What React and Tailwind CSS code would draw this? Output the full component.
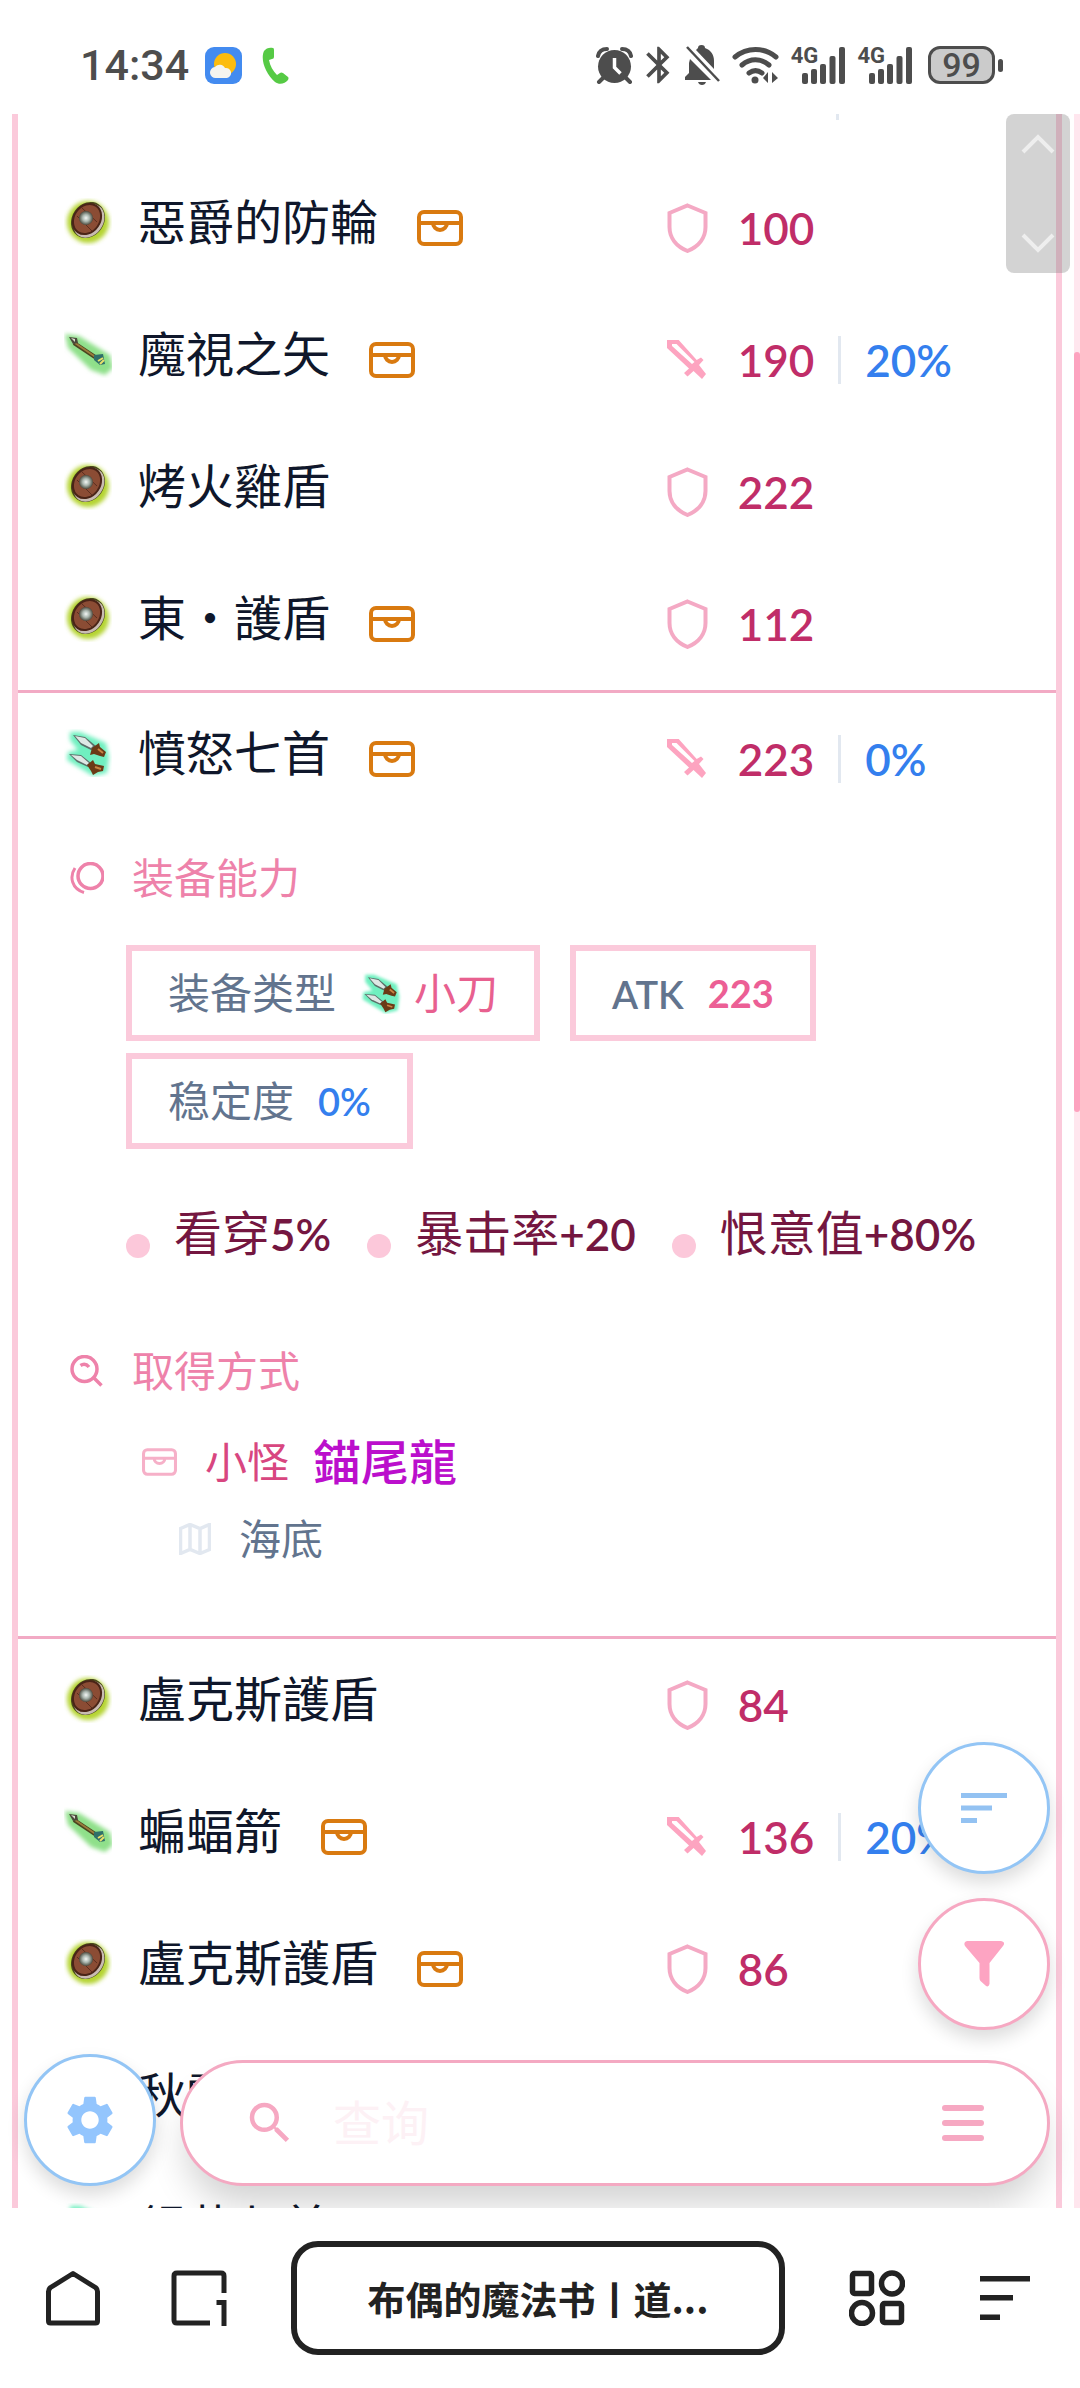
import { useState } from 'react';
import { MdBluetooth, MdSearch, MdSettings } from 'react-icons/md';

// Equipment shown above the opened entry
const itemsBefore = [
    { id: 1, type: 'shield', name: '惡爵的防輪', chest: true, value: 100 },
    { id: 2, type: 'arrow', name: '魔視之矢', chest: true, value: 190, stability: '20%' },
    { id: 3, type: 'shield', name: '烤火雞盾', value: 222 },
    { id: 4, type: 'shield', name: '東・護盾', chest: true, value: 112 },
];

const openItem = { id: 5, type: 'dagger', name: '憤怒七首', chest: true, value: 223, stability: '0%' };

// Equipment shown below the opened entry
const itemsAfter = [
    { id: 6, type: 'shield', name: '盧克斯護盾', value: 84 },
    { id: 7, type: 'arrow', name: '蝙蝠箭', chest: true, value: 136, stability: '20%' },
    { id: 8, type: 'shield', name: '盧克斯護盾', chest: true, value: 86 },
    { id: 9, type: 'shield', name: '秋霜', value: 90 },
    { id: 10, type: 'dagger', name: '銀花七首', value: 95 },
];

function ShieldPicture({ className }) {
    return (
        <svg viewBox="0 0 48 48" className={className} aria-hidden="true">
            <defs>
                <filter id="shieldGlow" x="-30%" y="-30%" width="160%" height="160%">
                    <feGaussianBlur stdDeviation="2" />
                </filter>
                <radialGradient id="shieldBoss">
                    <stop offset="0" stopColor="#f4f7f5" />
                    <stop offset="0.5" stopColor="#a9b5ae" />
                    <stop offset="1" stopColor="#4c4a3e" />
                </radialGradient>
            </defs>
            <circle cx="24" cy="24" r="21" fill="#b5d433" filter="url(#shieldGlow)" />
            <ellipse cx="24" cy="22" rx="16" ry="19" transform="rotate(35 24 22)" fill="#4a4a1c" />
            <ellipse cx="25" cy="23" rx="14" ry="18" transform="rotate(35 25 23)" fill="#c9bcb2" />
            <ellipse cx="23" cy="21" rx="14" ry="17" transform="rotate(35 23 21)" fill="#4a2417" />
            <ellipse cx="23" cy="21" rx="12" ry="15" transform="rotate(35 23 21)" fill="#8b4c34" />
            <path d="M13 18l15 15M18 10l15 14" stroke="#5c2e1f" strokeWidth="1" />
            <circle cx="22" cy="20" r="7" fill="url(#shieldBoss)" />
        </svg>
    );
}

function ArrowPicture({ className }) {
    return (
        <svg viewBox="0 0 48 48" className={className} aria-hidden="true">
            <defs>
                <filter id="arrowGlow" x="-30%" y="-30%" width="160%" height="160%">
                    <feGaussianBlur stdDeviation="2" />
                </filter>
            </defs>
            <path d="M1 4l14 2 31 19 3 13-8 7-14-5L4 18z" fill="#8fe08a" filter="url(#arrowGlow)" />
            <path d="M10 13l24 16" stroke="#4a4420" strokeWidth="4" />
            <path d="M11 13l22 15" stroke="#9a7c3c" strokeWidth="2" />
            <path d="M5 7l8 1 1 5-5 1z" fill="#4b4a3a" />
            <path d="M7 8l4 1v3z" fill="#d9ded0" />
            <path d="M30 25l9-1 1 5 1 5-5 1-6-5z" fill="#2f6f6a" />
            <path d="M34 31l5-3M36 34l4-4" stroke="#e8df6a" strokeWidth="2" />
        </svg>
    );
}

function DaggerPicture({ className }) {
    return (
        <svg viewBox="0 0 48 48" className={className} aria-hidden="true">
            <defs>
                <filter id="daggerGlow" x="-30%" y="-30%" width="160%" height="160%">
                    <feGaussianBlur stdDeviation="2" />
                </filter>
            </defs>
            <path d="M6 3h10l26 11 3 14-2 16-14 3L3 31l1-8 10-2-8-10z" fill="#6ff0c0" filter="url(#daggerGlow)" />
            <path d="M9 6l12 2 11 9-3 5-12-6z" fill="#5b6e69" />
            <path d="M11 7l10 2 8 8-2 2-10-5z" fill="#dfe8e5" />
            <path d="M28 19l7-5 1 4 6 5-2 5-4-1-6-2-4 1z" fill="#6b3a16" />
            <path d="M34 20l5 4" stroke="#c98342" strokeWidth="2" />
            <path d="M5 25l12 1 10 8-3 4-11-5z" fill="#5b6e69" />
            <path d="M7 26l10 1 8 7-2 2-10-5z" fill="#dfe8e5" />
            <path d="M23 36l6-5 2 4 9 2-1 5-5 1-5 3-2-4z" fill="#6b3a16" />
            <path d="M31 38l6 2" stroke="#c98342" strokeWidth="2" />
        </svg>
    );
}

function ItemPicture({ type, className }) {
    if (type === 'arrow') return <ArrowPicture className={className} />;
    if (type === 'dagger') return <DaggerPicture className={className} />;
    return <ShieldPicture className={className} />;
}

function ChestIcon({ className }) {
    return (
        <svg viewBox="0 0 46 36" fill="none" stroke="currentColor" strokeWidth="4" className={className} aria-hidden="true">
            <rect x="2" y="2" width="42" height="32" rx="5" />
            <path d="M2 13h42M16 13a7 7 0 0 0 14 0" />
        </svg>
    );
}

function ShieldIcon() {
    return (
        <svg viewBox="0 0 41 50" fill="none" stroke="#f4a9c4" strokeWidth="4" className="h-[50px] w-[41px] shrink-0" aria-hidden="true">
            <path d="M20.5 2.5l18 7.500V24c0 11-7 19.500-18 24C9.500 43.500 2.500 35 2.500 24V10z" />
        </svg>
    );
}

function SwordIcon() {
    return (
        <svg viewBox="0 0 41 40" fill="#fda4c0" className="h-10 w-[41px] shrink-0" aria-hidden="true">
            <path
                fillRule="evenodd"
                d="M0 0h11.700l18 20 4.300-2.500 2.500 2.500-4.500 5 7 9-4 5-8.500-8-6 5.500-3.500-3.500 5-4.500L0 8zM5 4v2l20 18 2.500-2L9.500 4z"
            />
        </svg>
    );
}

// One line of the list: picture, name, drop marker and main stats
function ItemRow({ item }) {
    return (
        <div className="grid h-[132px] grid-cols-[5fr_3fr] items-center">
            <div className="flex items-center gap-[39px] pl-[46px]">
                <div className="flex items-center gap-[26px] pb-3">
                    <ItemPicture type={item.type} className="size-12 shrink-0" />
                    <span className="whitespace-nowrap text-5xl leading-[48px] text-slate-900">{item.name}</span>
                </div>
                {item.chest && <ChestIcon className="h-9 w-[46px] shrink-0 text-[#d97a10]" />}
            </div>
            <div className="flex items-center whitespace-nowrap text-[44px] leading-[48px] font-semibold">
                {item.type === 'shield' ? <ShieldIcon /> : <SwordIcon />}
                <span className="ml-[30px] text-[#c02d68]">{item.value}</span>
                {item.stability && (
                    <span className="ml-6 border-l-3 border-slate-200 pl-6 text-[#347fee]">{item.stability}</span>
                )}
            </div>
        </div>
    );
}

function Chip({ label, children }) {
    return (
        <div className="flex h-24 items-center gap-6 border-6 border-[#fbcadb] px-9 leading-[48px]">
            <dt className="text-slate-500">{label}</dt>
            <dd className="flex items-center gap-3">{children}</dd>
        </div>
    );
}

function Ability({ name, amount }) {
    return (
        <li className="flex items-end gap-6">
            <span className="size-6 rounded-full bg-[#fcc8da]"></span>
            <span className="text-5xl leading-[48px]">
                {name}
                <span className="text-[44px] font-semibold leading-[48px]">{amount}</span>
            </span>
        </li>
    );
}

// Details of the opened entry
function ItemDetails() {
    return (
        <div lang="zh-CN" className="pb-[73px] pt-[29px] font-[Lato,'Noto_Sans_CJK_SC',sans-serif] text-[42px] leading-[48px]">
            <h2 className="flex items-center gap-7 pl-[52px] text-[#ee82aa]">
                <svg viewBox="0 0 34 32" fill="none" stroke="currentColor" className="h-8 w-[34px]" aria-hidden="true">
                    <circle cx="20.500" cy="14" r="12.500" strokeWidth="3.500" />
                    <path d="M5 6C-1 15 2 27 14 30.500" strokeWidth="3" />
                </svg>
                装备能力
            </h2>

            <dl className="mt-[43px] flex flex-wrap gap-x-[30px] gap-y-3 pl-[108px]">
                <Chip label="装备类型">
                    <DaggerPicture className="size-[42px]" />
                    <span className="text-[#e8608f]">小刀</span>
                </Chip>
                <Chip label={<span className="text-[38px] leading-[48px] font-semibold">ATK</span>}>
                    <span className="text-[38px] leading-[48px] font-bold text-[#ec5f95]">223</span>
                </Chip>
                <Chip label="稳定度">
                    <span className="text-[38px] leading-[48px] font-semibold text-[#347fee]">0%</span>
                </Chip>
            </dl>

            <ul className="mt-[60px] flex flex-wrap gap-x-9 pl-[108px] text-[#741640]">
                <Ability name="看穿" amount="5%" />
                <Ability name="暴击率" amount="+20" />
                <Ability name="恨意值" amount="+80%" />
            </ul>

            <h2 className="mt-[89px] flex items-center gap-[29px] pl-[52px] text-[#ee82aa]">
                <svg viewBox="0 0 33 32" fill="none" stroke="currentColor" strokeWidth="3.500" className="h-8 w-[33px]" aria-hidden="true">
                    <circle cx="14.500" cy="14" r="12.500" />
                    <path d="M23 22l8.500 8.500M10.500 10.500c3-2 6-1.500 8.500 1.500" />
                </svg>
                取得方式
            </h2>

            <div className="mt-[43px] flex items-center pl-[124px]">
                <ChestIcon className="h-7 w-[35px] text-[#f6b0c8]" />
                <span className="ml-7 text-[#d84680]">小怪</span>
                <a href="#monster" lang="zh-TW" className="ml-6 text-5xl leading-[48px] font-medium text-[#bb0fcc]">錨尾龍</a>
            </div>

            <div className="mt-[29px] flex items-center gap-7 pl-[161px] text-slate-500">
                <svg viewBox="0 0 32 32" fill="none" stroke="#e2e8f0" strokeWidth="3.500" className="size-8" aria-hidden="true">
                    <path d="M1.500 5.500l9.500-4 10 4 9.500-4v25l-9.500 4-10-4-9.500 4zM11 1.500v25M21 5.500v25" />
                </svg>
                海底
            </div>
        </div>
    );
}

function Signal() {
    return (
        <div className="flex items-start">
            <span className="-mr-4 text-[22px] leading-[18px] font-bold">4G</span>
            <svg viewBox="0 0 43 37" fill="currentColor" className="h-[37px] w-[43px]" aria-hidden="true">
                <rect x="0" y="26" width="6" height="11" rx="2" />
                <rect x="9" y="22" width="6" height="15" rx="2" />
                <rect x="18" y="17" width="6" height="20" rx="2" />
                <rect x="27.500" y="9" width="6" height="28" rx="2" />
                <rect x="37" y="0" width="6" height="37" rx="2" />
            </svg>
        </div>
    );
}

function StatusBar() {
    return (
        <header className="flex h-[114px] shrink-0 items-center justify-between pl-20 pr-[77px] pt-4 font-[Roboto,sans-serif] text-[#4d4d4d]">
            <div className="flex items-center gap-4">
                <span className="text-[43px] leading-[48px] font-medium">14:34</span>
                <svg viewBox="0 0 37 37" className="size-[37px]" aria-hidden="true">
                    <rect width="37" height="37" rx="9" fill="#438bf0" />
                    <circle cx="20" cy="17" r="11" fill="#fcbc0e" />
                    <path d="M11 31a5.500 5.500 0 0 1-1-11 6 6 0 0 1 10 1 5 5 0 0 1 2 10z" fill="#f5f4ef" />
                </svg>
                <svg viewBox="0 0 27 37" fill="#56ca45" className="ml-1 h-[37px] w-[27px]" aria-hidden="true">
                    <path d="M2 4C4 1 8 0 11 1q1 0 1 2v7q0 2-2 2l-3 1c1 6 4 11 8 15l3-2q1-1 3 0l5 4q1 1 0 3c-3 4-9 5-13 2C4 27-2 13 2 4z" />
                </svg>
            </div>
            <div className="flex items-center gap-3">
                <svg viewBox="0 0 37 37" fill="currentColor" className="size-[37px]" aria-hidden="true">
                    <circle cx="18.500" cy="19.500" r="16.500" />
                    <path d="M18.500 11v9.500l6 6" fill="none" stroke="#fff" strokeWidth="3.500" />
                    <path d="M2 9c1-5 4-7 9-7M35 9c-1-5-4-7-9-7M3 35l5-5M34 35l-5-5" fill="none" stroke="currentColor" strokeWidth="4" strokeLinecap="round" />
                </svg>
                <MdBluetooth className="-mx-2 size-11" />
                <svg viewBox="0 0 35 40" fill="currentColor" className="h-10 w-[35px]" aria-hidden="true">
                    <path d="M5 14l21 21H0v-3l4-4V18zM11 5l2-2q0-3 3.500-3T20 3c6 2 9 7 9 13v8zM13 37h8q-1 3-4 3t-4-3z" />
                    <path d="M2 2l32 34" stroke="currentColor" strokeWidth="2.500" />
                </svg>
                <svg viewBox="0 0 47 37" fill="none" stroke="currentColor" strokeWidth="5" strokeLinecap="round" className="h-[37px] w-[47px]" aria-hidden="true">
                    <path d="M3 10c12-10 29-10 41 0M10 18c8-7 19-7 27 0M17 26c4-3 9-3 13 0" />
                    <circle cx="23" cy="33" r="3.500" fill="currentColor" stroke="none" />
                    <path d="M36 25v11l-5-5zM40 25v11l6-5z" fill="currentColor" stroke="none" />
                </svg>
                <Signal />
                <Signal />
                <div className="ml-1 flex items-center gap-[3px]">
                    <span className="flex h-[38px] w-[67px] items-center justify-center rounded-[12px] border-3 border-[#4d4d4d] bg-[#cbcbcb] text-[34px] leading-[34px] font-medium">99</span>
                    <span className="h-[13px] w-[5px] rounded-full bg-[#4d4d4d]"></span>
                </div>
            </div>
        </header>
    );
}

// Round buttons and search box that float over the list
function FloatingTools() {
    const [query, setQuery] = useState('');

    return (
        <div className="absolute bottom-[22px] left-6 right-[30px] flex flex-col items-end gap-6">
            <button aria-label="排序" className="flex size-[132px] items-center justify-center rounded-full border-3 border-[#93c5f5] bg-white shadow-[0_9px_18px_rgba(0,0,0,0.14)]">
                <svg viewBox="0 0 46 30" fill="#93c2f2" className="h-[30px] w-[46px]" aria-hidden="true">
                    <path d="M0 0h46v5H0zM0 12.500h31v5H0zM0 25h16v5H0z" />
                </svg>
            </button>
            <button aria-label="筛选" className="flex size-[132px] items-center justify-center rounded-full border-3 border-[#f6a8c2] bg-white shadow-[0_9px_18px_rgba(0,0,0,0.14)]">
                <svg viewBox="0 0 40 46" fill="#fda4c2" className="h-[46px] w-10" aria-hidden="true">
                    <path d="M3 0h34q5 1 2 5L25.500 22v21q-1 4-4 1.500L16.500 40q-1-1-1-3V22L1 5q-2-4 2-5z" />
                </svg>
            </button>
            <div className="flex w-full items-end gap-6">
                <button aria-label="设置" className="flex size-[132px] shrink-0 items-center justify-center rounded-full border-3 border-[#93c5f5] bg-white text-[#93c5fd] shadow-[0_9px_18px_rgba(0,0,0,0.14)]">
                    <MdSettings className="size-[58px]" />
                </button>
                <div className="flex h-[126px] min-w-0 flex-1 items-center rounded-full border-3 border-[#f4a9c2] bg-white pl-[60px] pr-[63px] text-[#f6a8c2] shadow-[0_24px_36px_-6px_rgba(0,0,0,0.18)]">
                    <MdSearch className="size-[54px] shrink-0" />
                    <input
                        type="text"
                        aria-label="查询"
                        placeholder="查询"
                        value={query}
                        onChange={(e) => setQuery(e.target.value)}
                        className="ml-9 min-w-0 flex-1 font-[Lato,'Noto_Sans_CJK_SC',sans-serif] text-5xl leading-[60px] text-slate-700 outline-none placeholder:text-[#fdf1f5]"
                    />
                    <button aria-label="菜单">
                        <svg viewBox="0 0 42 36" fill="currentColor" className="h-9 w-[42px]" aria-hidden="true">
                            <rect width="42" height="6" rx="3" />
                            <rect y="15" width="42" height="6" rx="3" />
                            <rect y="30" width="42" height="6" rx="3" />
                        </svg>
                    </button>
                </div>
            </div>
        </div>
    );
}

// Bottom bar of the browser
function BrowserBar() {
    return (
        <nav className="flex h-[180px] shrink-0 items-center gap-16 bg-white pl-[45px] pr-[49px] text-[#222]">
            <div className="flex gap-[70px]">
                <button aria-label="主页">
                    <svg viewBox="0 0 56 56" fill="none" stroke="currentColor" strokeWidth="5" strokeLinejoin="round" className="size-14" aria-hidden="true">
                        <path d="M28 3.500L50.500 17.500q2 1.500 2 4V51q0 2-2 2h-45q-2 0-2-2V21.500q0-2.500 2-4z" />
                    </svg>
                </button>
                <button aria-label="标签页">
                    <svg viewBox="0 0 56 56" fill="none" stroke="currentColor" strokeWidth="5" className="size-14" aria-hidden="true">
                        <path d="M39 53H6q-3 0-3-3V6q0-3 3-3h44q3 0 3 3v17M45.500 32.500H53V56" />
                    </svg>
                </button>
            </div>
            <button className="h-[114px] min-w-0 flex-1 truncate rounded-[27px] border-6 border-[#222] font-['Noto_Sans_CJK_SC',sans-serif] text-[38px] leading-[60px] font-bold">
                布偶的魔法书丨道...
            </button>
            <div className="flex gap-[70px]">
                <button aria-label="应用">
                    <svg viewBox="0 0 56 56" fill="none" stroke="currentColor" strokeWidth="5.500" className="size-14" aria-hidden="true">
                        <rect x="3.500" y="3.500" width="19" height="20" rx="2" />
                        <circle cx="43" cy="13.500" r="10.500" />
                        <circle cx="13" cy="43" r="10.500" />
                        <rect x="33.500" y="33.500" width="19" height="19" rx="2" />
                    </svg>
                </button>
                <button aria-label="更多">
                    <svg viewBox="0 0 56 56" fill="currentColor" className="size-14" aria-hidden="true">
                        <path d="M5 6h50v5.500H5zM5 25h33v5.500H5zM5 44.500h20V50H5z" />
                    </svg>
                </button>
            </div>
        </nav>
    );
}

function App() {
    return (
        <div className="flex h-screen flex-col bg-white">
            <StatusBar />

            <main className="relative flex min-h-0 flex-1 overflow-hidden">
                <div className="mx-3 min-w-0 flex-1 self-start border-x-6 border-[#fbcadb] font-[Lato,'Noto_Sans_CJK_TC',sans-serif]">
                    {/* End of the row that is scrolled away */}
                    <div className="h-12 pl-[818px]">
                        <div className="h-1.5 w-[3px] bg-slate-200"></div>
                    </div>

                    {itemsBefore.map((item) => <ItemRow key={item.id} item={item} />)}

                    <section className="border-y-3 border-[#f2aac4]">
                        <ItemRow item={openItem} />
                        <ItemDetails />
                    </section>

                    {itemsAfter.map((item) => <ItemRow key={item.id} item={item} />)}
                </div>

                {/* Scroll bar of the page */}
                <div className="w-1.5 bg-[#ffe6ee] pt-[238px]">
                    <div className="h-[760px] rounded-full bg-[#fda3bf]"></div>
                </div>

                {/* Quick jump to the top or the bottom */}
                <div className="absolute right-2.5 top-0 flex h-[159px] w-16 flex-col items-center justify-between rounded-lg bg-[#808080]/35 py-5">
                    <button aria-label="顶部">
                        <svg viewBox="0 0 34 20" fill="none" stroke="#eeeeee" strokeWidth="4" className="h-5 w-[34px]" aria-hidden="true">
                            <path d="M2 18L17 3l15 15" />
                        </svg>
                    </button>
                    <button aria-label="底部">
                        <svg viewBox="0 0 34 20" fill="none" stroke="#eeeeee" strokeWidth="4" className="h-5 w-[34px]" aria-hidden="true">
                            <path d="M2 2l15 15L32 2" />
                        </svg>
                    </button>
                </div>

                <FloatingTools />
            </main>

            <BrowserBar />
        </div>
    );
}

export default App;
